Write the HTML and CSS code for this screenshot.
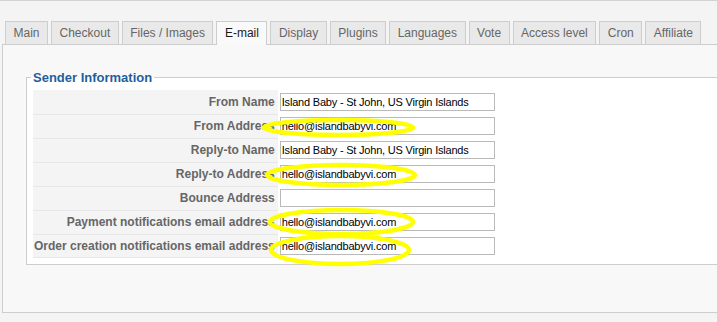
FILE: index.html
```html
<!DOCTYPE html>
<html lang="en">
<head>
<meta charset="utf-8">
<title>E-mail configuration</title>
<link rel="stylesheet" href="styles.css">
</head>
<body>
<ul class="tabs">
  <li class="tab">Main</li>
  <li class="tab">Checkout</li>
  <li class="tab">Files / Images</li>
  <li class="tab active">E-mail</li>
  <li class="tab">Display</li>
  <li class="tab">Plugins</li>
  <li class="tab">Languages</li>
  <li class="tab">Vote</li>
  <li class="tab">Access level</li>
  <li class="tab">Cron</li>
  <li class="tab">Affiliate</li>
</ul>
<div class="panel">
  <fieldset class="group">
    <legend class="group-title">Sender Information</legend>
    <table class="form">
      <tr><td class="key">From Name</td><td class="val"><input class="field" type="text" value="Island Baby - St John, US Virgin Islands"></td></tr>
      <tr><td class="key">From Address</td><td class="val"><input class="field" type="text" value="hello@islandbabyvi.com"></td></tr>
      <tr><td class="key">Reply-to Name</td><td class="val"><input class="field" type="text" value="Island Baby - St John, US Virgin Islands"></td></tr>
      <tr><td class="key">Reply-to Address</td><td class="val"><input class="field" type="text" value="hello@islandbabyvi.com"></td></tr>
      <tr><td class="key">Bounce Address</td><td class="val"><input class="field" type="text" value=""></td></tr>
      <tr><td class="key">Payment notifications email address</td><td class="val"><input class="field" type="text" value="hello@islandbabyvi.com"></td></tr>
      <tr><td class="key">Order creation notifications email address</td><td class="val"><input class="field" type="text" value="hello@islandbabyvi.com"></td></tr>
    </table>
  </fieldset>
</div>
<svg class="marks" width="717" height="322" viewBox="0 0 717 322" aria-hidden="true">
  <ellipse cx="338.5" cy="126.5" rx="74.5" ry="7.5"/>
  <ellipse cx="341" cy="174" rx="74" ry="10"/>
  <ellipse cx="341.5" cy="221" rx="71.5" ry="12"/>
  <ellipse cx="340" cy="249" rx="69" ry="14"/>
</svg>
</body>
</html>
```
FILE: styles.css
```css
html, body {
  margin: 0;
  padding: 0;
}
body {
  position: relative;
  width: 717px;
  height: 322px;
  box-sizing: border-box;
  overflow: hidden;
  background: #f4f4f4;
  border-top: 1px solid #d4d4d4;
  font-family: "Liberation Sans", Arial, sans-serif;
}
.tabs {
  list-style: none;
  margin: 0;
  padding: 20px 0 0 5px;
  display: flex;
  gap: 3px;
  align-items: flex-start;
}
.tab {
  position: relative;
  height: 22px;
  line-height: 22px;
  padding: 0 7.5px;
  border: 1px solid #cdcdcd;
  border-bottom: 0;
  background: #e9e9e9;
  color: #666;
  font-size: 12px;
  white-space: nowrap;
}
.tab.active {
  height: 23px;
  margin-bottom: -1px;
  background: #f9f9f9;
  color: #1a1a1a;
  z-index: 1;
}
.panel {
  margin-left: 2px;
  border: 1px solid #cdcdcd;
  border-right: 0;
  background: #f8f8f8;
  padding: 25px 0 47px 23px;
}
.group {
  margin: 0;
  min-width: 0;
  border: 1px solid #cdcdcd;
  border-right: 0;
  background: #fff;
  padding: 5px 0 6px 6px;
}
.group-title {
  padding: 0 2px;
  margin-left: -2px;
  font-size: 13px;
  line-height: 15px;
  font-weight: bold;
  color: #1f5e9c;
}
.form {
  border-collapse: collapse;
}
.key {
  box-sizing: border-box;
  width: 243px;
  height: 24px;
  padding: 0 3px 0 1px;
  background: #f4f4f4;
  border-bottom: 1px solid #e7e7e7;
  text-align: right;
  white-space: nowrap;
  font-size: 12px;
  font-weight: bold;
  color: #666;
}
.form tr:last-child .key {
  height: 23px;
}
.val {
  padding: 0 0 0 2px;
}
.field {
  display: block;
  box-sizing: border-box;
  width: 215px;
  height: 18px;
  margin: 0;
  padding: 0 1px;
  border: 1px solid #bababa;
  background: #fff;
  color: #000;
  font-family: "Liberation Sans", Arial, sans-serif;
  font-size: 11px;
  letter-spacing: -0.2px;
}
.marks {
  position: absolute;
  top: 0;
  left: 0;
  pointer-events: none;
}
.marks ellipse {
  fill: none;
  stroke: #ffff00;
  stroke-width: 4.5;
}
```
